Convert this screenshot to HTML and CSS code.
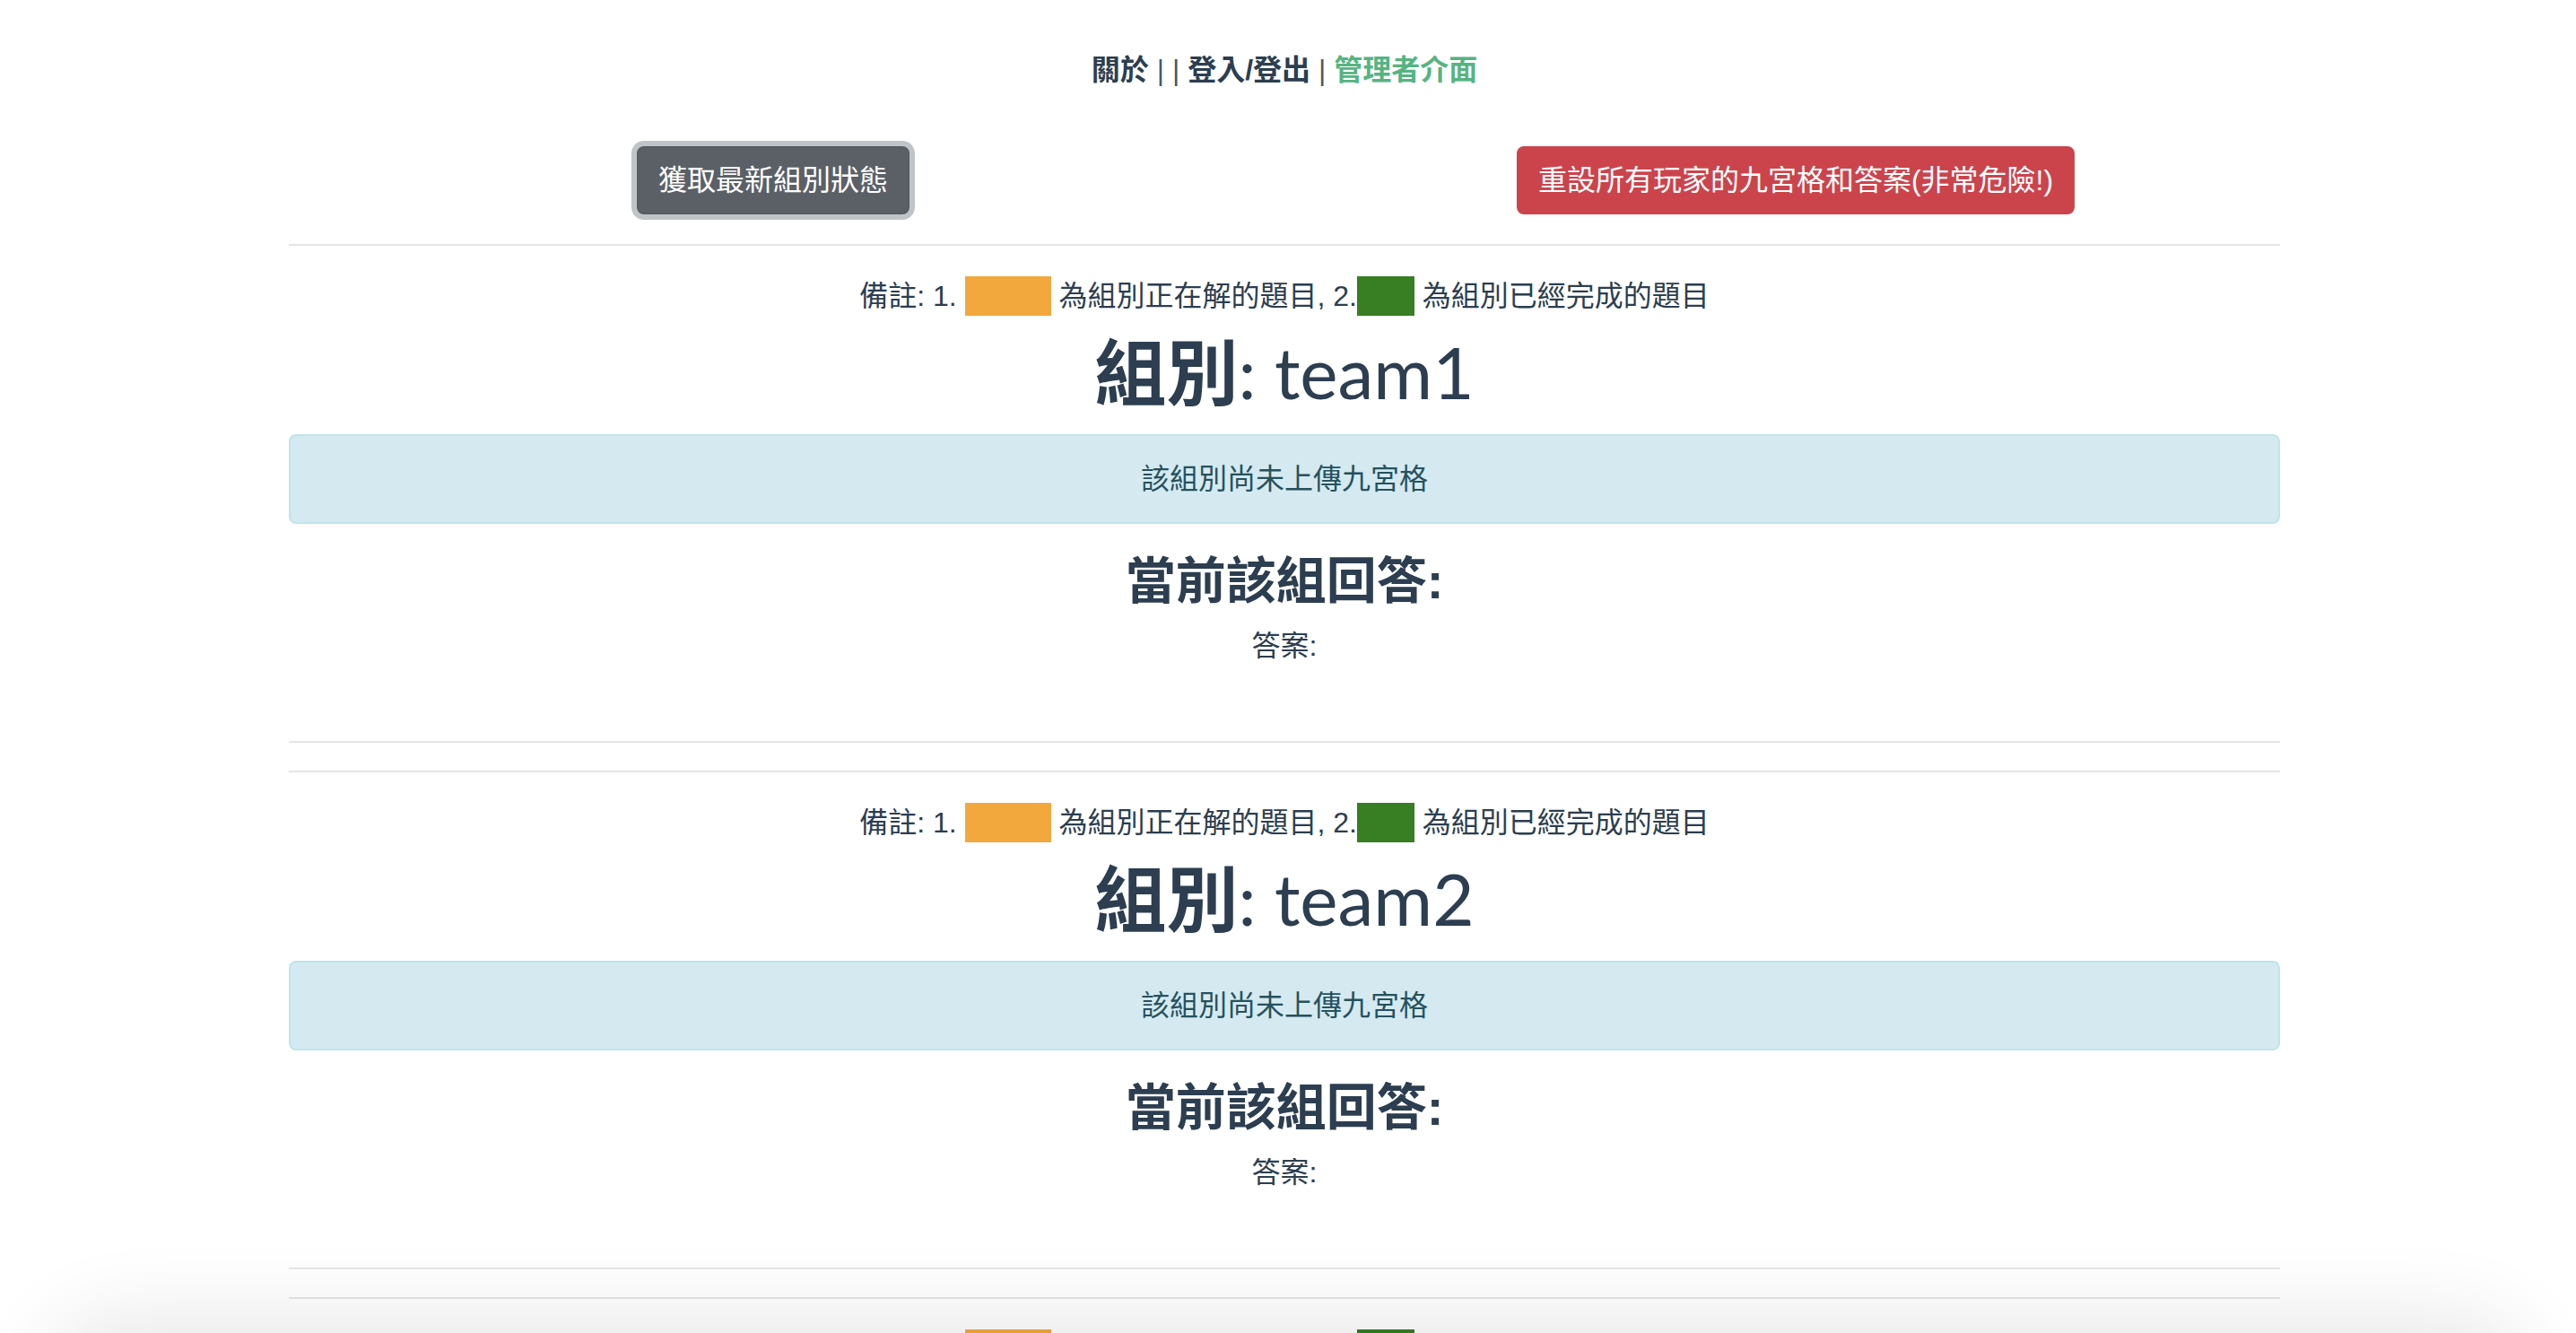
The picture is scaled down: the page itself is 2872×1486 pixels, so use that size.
FILE: index.html
```html
<!DOCTYPE html>
<html lang="zh-Hant">
<head>
<meta charset="utf-8">
<title>管理者介面</title>
<link rel="stylesheet" href="styles.css">
</head>
<body>
<div class="app">
  <nav class="nav">
    <a class="nav-link" href="#">關於</a> <span class="sep">|</span> <a class="nav-link" href="#"></a><span class="sep">|</span> <a class="nav-link" href="#">登入/登出</a> <span class="sep">|</span> <a class="nav-link active" href="#">管理者介面</a>
  </nav>
  <div class="container">
    <div class="actions">
      <div class="action-col"><button class="btn btn-secondary focused" type="button">獲取最新組別狀態</button></div>
      <div class="action-col"><button class="btn btn-danger" type="button">重設所有玩家的九宮格和答案(非常危險!)</button></div>
    </div>

    <section class="team">
      <hr class="rule">
      <p class="note">備註: 1. <span class="swatch swatch-working"></span> 為組別正在解的題目, 2.<span class="swatch swatch-done"></span> 為組別已經完成的題目</p>
      <h1 class="team-title"><span class="cjk">組別</span>: team1</h1>
      <div class="alert">該組別尚未上傳九宮格</div>
      <h3 class="answer-title">當前該組回答:</h3>
      <p class="answer">答案:</p>
      <hr class="rule rule-end">
    </section>

    <section class="team">
      <hr class="rule">
      <p class="note">備註: 1. <span class="swatch swatch-working"></span> 為組別正在解的題目, 2.<span class="swatch swatch-done"></span> 為組別已經完成的題目</p>
      <h1 class="team-title"><span class="cjk">組別</span>: team2</h1>
      <div class="alert">該組別尚未上傳九宮格</div>
      <h3 class="answer-title">當前該組回答:</h3>
      <p class="answer">答案:</p>
      <hr class="rule rule-end">
    </section>

    <section class="team">
      <hr class="rule">
      <p class="note">備註: 1. <span class="swatch swatch-working"></span> 為組別正在解的題目, 2.<span class="swatch swatch-done"></span> 為組別已經完成的題目</p>
      <h1 class="team-title"><span class="cjk">組別</span>: team3</h1>
      <div class="alert">該組別尚未上傳九宮格</div>
      <h3 class="answer-title">當前該組回答:</h3>
      <p class="answer">答案:</p>
      <hr class="rule rule-end">
    </section>
  </div>
</div>
<div class="dock-shadow"></div>
</body>
</html>
```
FILE: styles.css
```css
html {
  scrollbar-width: none;
}
html::-webkit-scrollbar {
  display: none;
}
body {
  margin: 0 8px 0 0;
  background: #ffffff;
  color: #2c3e50;
  font-family: "Liberation Sans", "Noto Sans CJK TC", sans-serif;
  font-size: 32px;
  line-height: 48px;
}
.app {
  text-align: center;
}
.nav {
  padding: 54px 0 61px;
  line-height: 48px;
  font-size: 32px;
}
.nav-link {
  font-weight: 700;
  color: #2c3e50;
  text-decoration: none;
}
.nav-link.active {
  color: #56b482;
}
.sep {
  color: #4a5868;
  font-weight: 300;
}
.container {
  width: 2220px;
  margin: 0 auto;
}
.actions {
  display: grid;
  grid-template-columns: 1fr 1fr;
  margin: 0 -30px 33px;
}
.action-col {
  text-align: center;
}
.btn {
  font-family: "Liberation Sans", "Noto Sans CJK TC", sans-serif;
  font-size: 32px;
  line-height: 48px;
  padding: 12px 22px;
  border: 2px solid transparent;
  border-radius: 8px;
  color: #ffffff;
  cursor: pointer;
  vertical-align: top;
}
.btn-secondary {
  background: #5b6067;
  border-color: #555b61;
}
.btn-secondary.focused {
  box-shadow: 0 0 0 6px rgba(130, 138, 145, 0.5);
}
.btn-danger {
  background: #cb444c;
  border-color: #cb444c;
}
.rule {
  margin: 0;
  border: 0;
  border-top: 2px solid #e5e5e5;
  height: 0;
}
.team + .team {
  margin-top: 31px;
}
.note {
  margin: 32px 0 0;
  height: 48px;
  line-height: 48px;
  font-size: 32px;
}
.swatch {
  display: inline-block;
  height: 44px;
  vertical-align: middle;
  position: relative;
  top: -3px;
}
.swatch-working {
  width: 96px;
  background: #f3a83d;
}
.swatch-done {
  width: 64px;
  background: #387e22;
}
.team-title {
  margin: 12px 0 22px;
  height: 96px;
  font-family: "Lato", "Noto Sans CJK TC", sans-serif;
  font-size: 80px;
  line-height: 96px;
  font-weight: 400;
}
.cjk {
  font-family: "Noto Sans CJK TC", sans-serif;
  font-weight: 700;
  line-height: 1;
}
.alert {
  padding: 24px 40px;
  border: 2px solid #bee5eb;
  border-radius: 8px;
  background: #d4eaf0;
  color: #26515e;
  line-height: 48px;
}
.answer-title {
  margin: 30px 0 0;
  font-size: 56px;
  line-height: 67px;
  font-weight: 700;
}
.answer {
  margin: 15px 0 0;
  line-height: 48px;
}
.rule-end {
  margin-top: 82px;
}
.dock-shadow {
  position: fixed;
  left: 70px;
  right: 70px;
  bottom: -120px;
  height: 120px;
  border-radius: 60px;
  box-shadow: 0 0 90px 20px rgba(0, 0, 0, 0.09);
}
```
